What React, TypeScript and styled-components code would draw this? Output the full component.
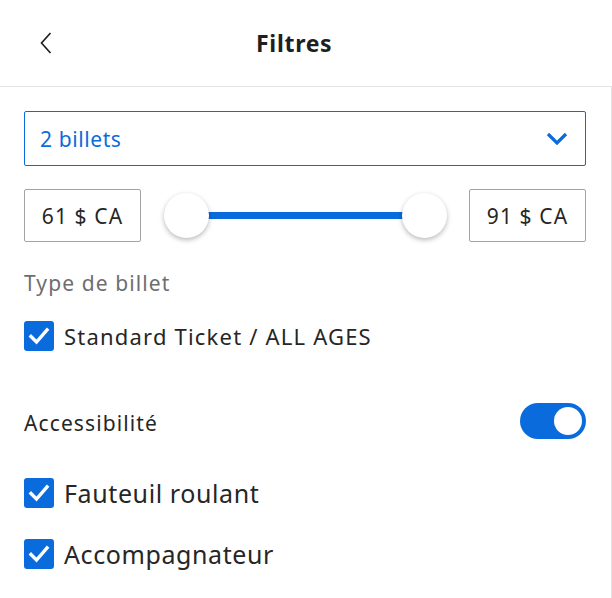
import styled, { createGlobalStyle } from "styled-components";

const GlobalStyle = createGlobalStyle`
  html, body {
    margin: 0;
    padding: 0;
    background: #ffffff;
  }
  body {
    font-family: "Noto Sans", Lato, Arial, sans-serif;
    color: #262626;
  }
`;

const Page = styled.div`
  width: 612px;
  height: 598px;
  display: flex;
  flex-direction: column;
  overflow: hidden;
`;

const Header = styled.header`
  height: 86px;
  flex-shrink: 0;
  display: flex;
  align-items: center;
  border-bottom: 1px solid #e4e4e4;
`;

const BackButton = styled.button`
  border: none;
  background: none;
  padding: 0;
  margin-left: 36px;
  width: 20px;
  height: 24px;
  display: flex;
  align-items: center;
  justify-content: center;
  cursor: pointer;
`;

const Title = styled.h1`
  margin: 0 0 0 200px;
  font-size: 23px;
  font-weight: 700;
  letter-spacing: 0.7px;
  color: #1f1f1f;
`;

const Body = styled.div`
  flex: 1;
  border-right: 1px solid #e4e4e4;
  padding: 24px 25px 0 24px;
  display: flex;
  flex-direction: column;
  letter-spacing: 1.1px;
`;

const Select = styled.div`
  height: 55px;
  box-sizing: border-box;
  border: 1px solid #0a6cdc;
  border-radius: 2px;
  display: flex;
  align-items: center;
  justify-content: space-between;
  padding: 0 17px 0 15px;
  color: #0a6cdc;
  font-size: 21px;
  letter-spacing: 0.6px;
`;

const PriceRow = styled.div`
  margin-top: 23px;
  height: 53px;
  display: flex;
  align-items: center;
`;

const PriceBox = styled.div`
  width: 117px;
  height: 53px;
  box-sizing: border-box;
  border: 1px solid #a3a3a3;
  border-radius: 2px;
  display: flex;
  align-items: center;
  justify-content: center;
  font-size: 21px;
  color: #262626;
`;

const Slider = styled.div`
  flex: 1;
  margin: 0 22px 0 23px;
  height: 45px;
  display: flex;
  align-items: center;
  position: relative;
`;

const Track = styled.div`
  flex: 1;
  height: 7px;
  background: #0a6cdc;
  margin: 0 22px;
`;

const Thumb = styled.div<{ side: "left" | "right" }>`
  position: absolute;
  top: 0;
  ${(p) => (p.side === "left" ? "left: 0;" : "right: 0;")}
  width: 45px;
  height: 45px;
  border-radius: 50%;
  background: #ffffff;
  box-shadow: 0 2px 5px rgba(0, 0, 0, 0.28);
`;

const SectionLabel = styled.div`
  margin-top: 28px;
  font-size: 21px;
  color: #6e6e6e;
  line-height: 26px;
`;

const CheckRow = styled.label<{ top: number; big?: boolean }>`
  margin-top: ${(p) => p.top}px;
  display: flex;
  align-items: center;
  gap: 10px;
  font-size: ${(p) => (p.big ? 25 : 22)}px;
  letter-spacing: ${(p) => (p.big ? 0.6 : 1.2)}px;
  color: #262626;
  height: 30px;
`;

const Box = styled.span`
  width: 30px;
  height: 30px;
  border-radius: 3px;
  background: #0a6cdc;
  display: flex;
  align-items: center;
  justify-content: center;
  flex-shrink: 0;
`;

const ToggleRow = styled.div`
  margin-top: 52px;
  height: 36px;
  display: flex;
  align-items: center;
  justify-content: space-between;
  font-size: 21px;
  color: #262626;
`;

const ToggleLabel = styled.span`
  padding-top: 3px;
`;

const Toggle = styled.div`
  width: 66px;
  height: 36px;
  border-radius: 18px;
  background: #0a6cdc;
  box-sizing: border-box;
  padding: 4px;
  display: flex;
  justify-content: flex-end;
`;

const Knob = styled.div`
  width: 28px;
  height: 28px;
  border-radius: 50%;
  background: #ffffff;
`;

function Check() {
  return (
    <svg width="22" height="20" viewBox="0 0 22 20">
      <path
        d="M3 10.5 L8.5 16 L19 4"
        fill="none"
        stroke="#ffffff"
        strokeWidth="3.4"
        strokeLinecap="square"
      />
    </svg>
  );
}

function Checkbox({
  label,
  top,
  big,
}: {
  label: string;
  top: number;
  big?: boolean;
}) {
  return (
    <CheckRow top={top} big={big}>
      <Box>
        <Check />
      </Box>
      {label}
    </CheckRow>
  );
}

export default function App() {
  return (
    <Page>
      <GlobalStyle />
      <Header>
        <BackButton aria-label="Retour">
          <svg width="12" height="22" viewBox="0 0 12 22">
            <path
              d="M10.5 1 L1.5 11 L10.5 21"
              fill="none"
              stroke="#1a1a1a"
              strokeWidth="1.6"
            />
          </svg>
        </BackButton>
        <Title>Filtres</Title>
      </Header>
      <Body>
        <Select>
          <span>2 billets</span>
          <svg width="22" height="14" viewBox="0 0 22 14">
            <path
              d="M2 2 L11 11 L20 2"
              fill="none"
              stroke="#0a6cdc"
              strokeWidth="3.2"
            />
          </svg>
        </Select>
        <PriceRow>
          <PriceBox>61 $ CA</PriceBox>
          <Slider>
            <Track />
            <Thumb side="left" />
            <Thumb side="right" />
          </Slider>
          <PriceBox>91 $ CA</PriceBox>
        </PriceRow>
        <SectionLabel>Type de billet</SectionLabel>
        <Checkbox label="Standard Ticket / ALL AGES" top={25} />
        <ToggleRow>
          <ToggleLabel>Accessibilité</ToggleLabel>
          <Toggle>
            <Knob />
          </Toggle>
        </ToggleRow>
        <Checkbox label="Fauteuil roulant" top={39} big />
        <Checkbox label="Accompagnateur" top={31} big />
      </Body>
    </Page>
  );
}
